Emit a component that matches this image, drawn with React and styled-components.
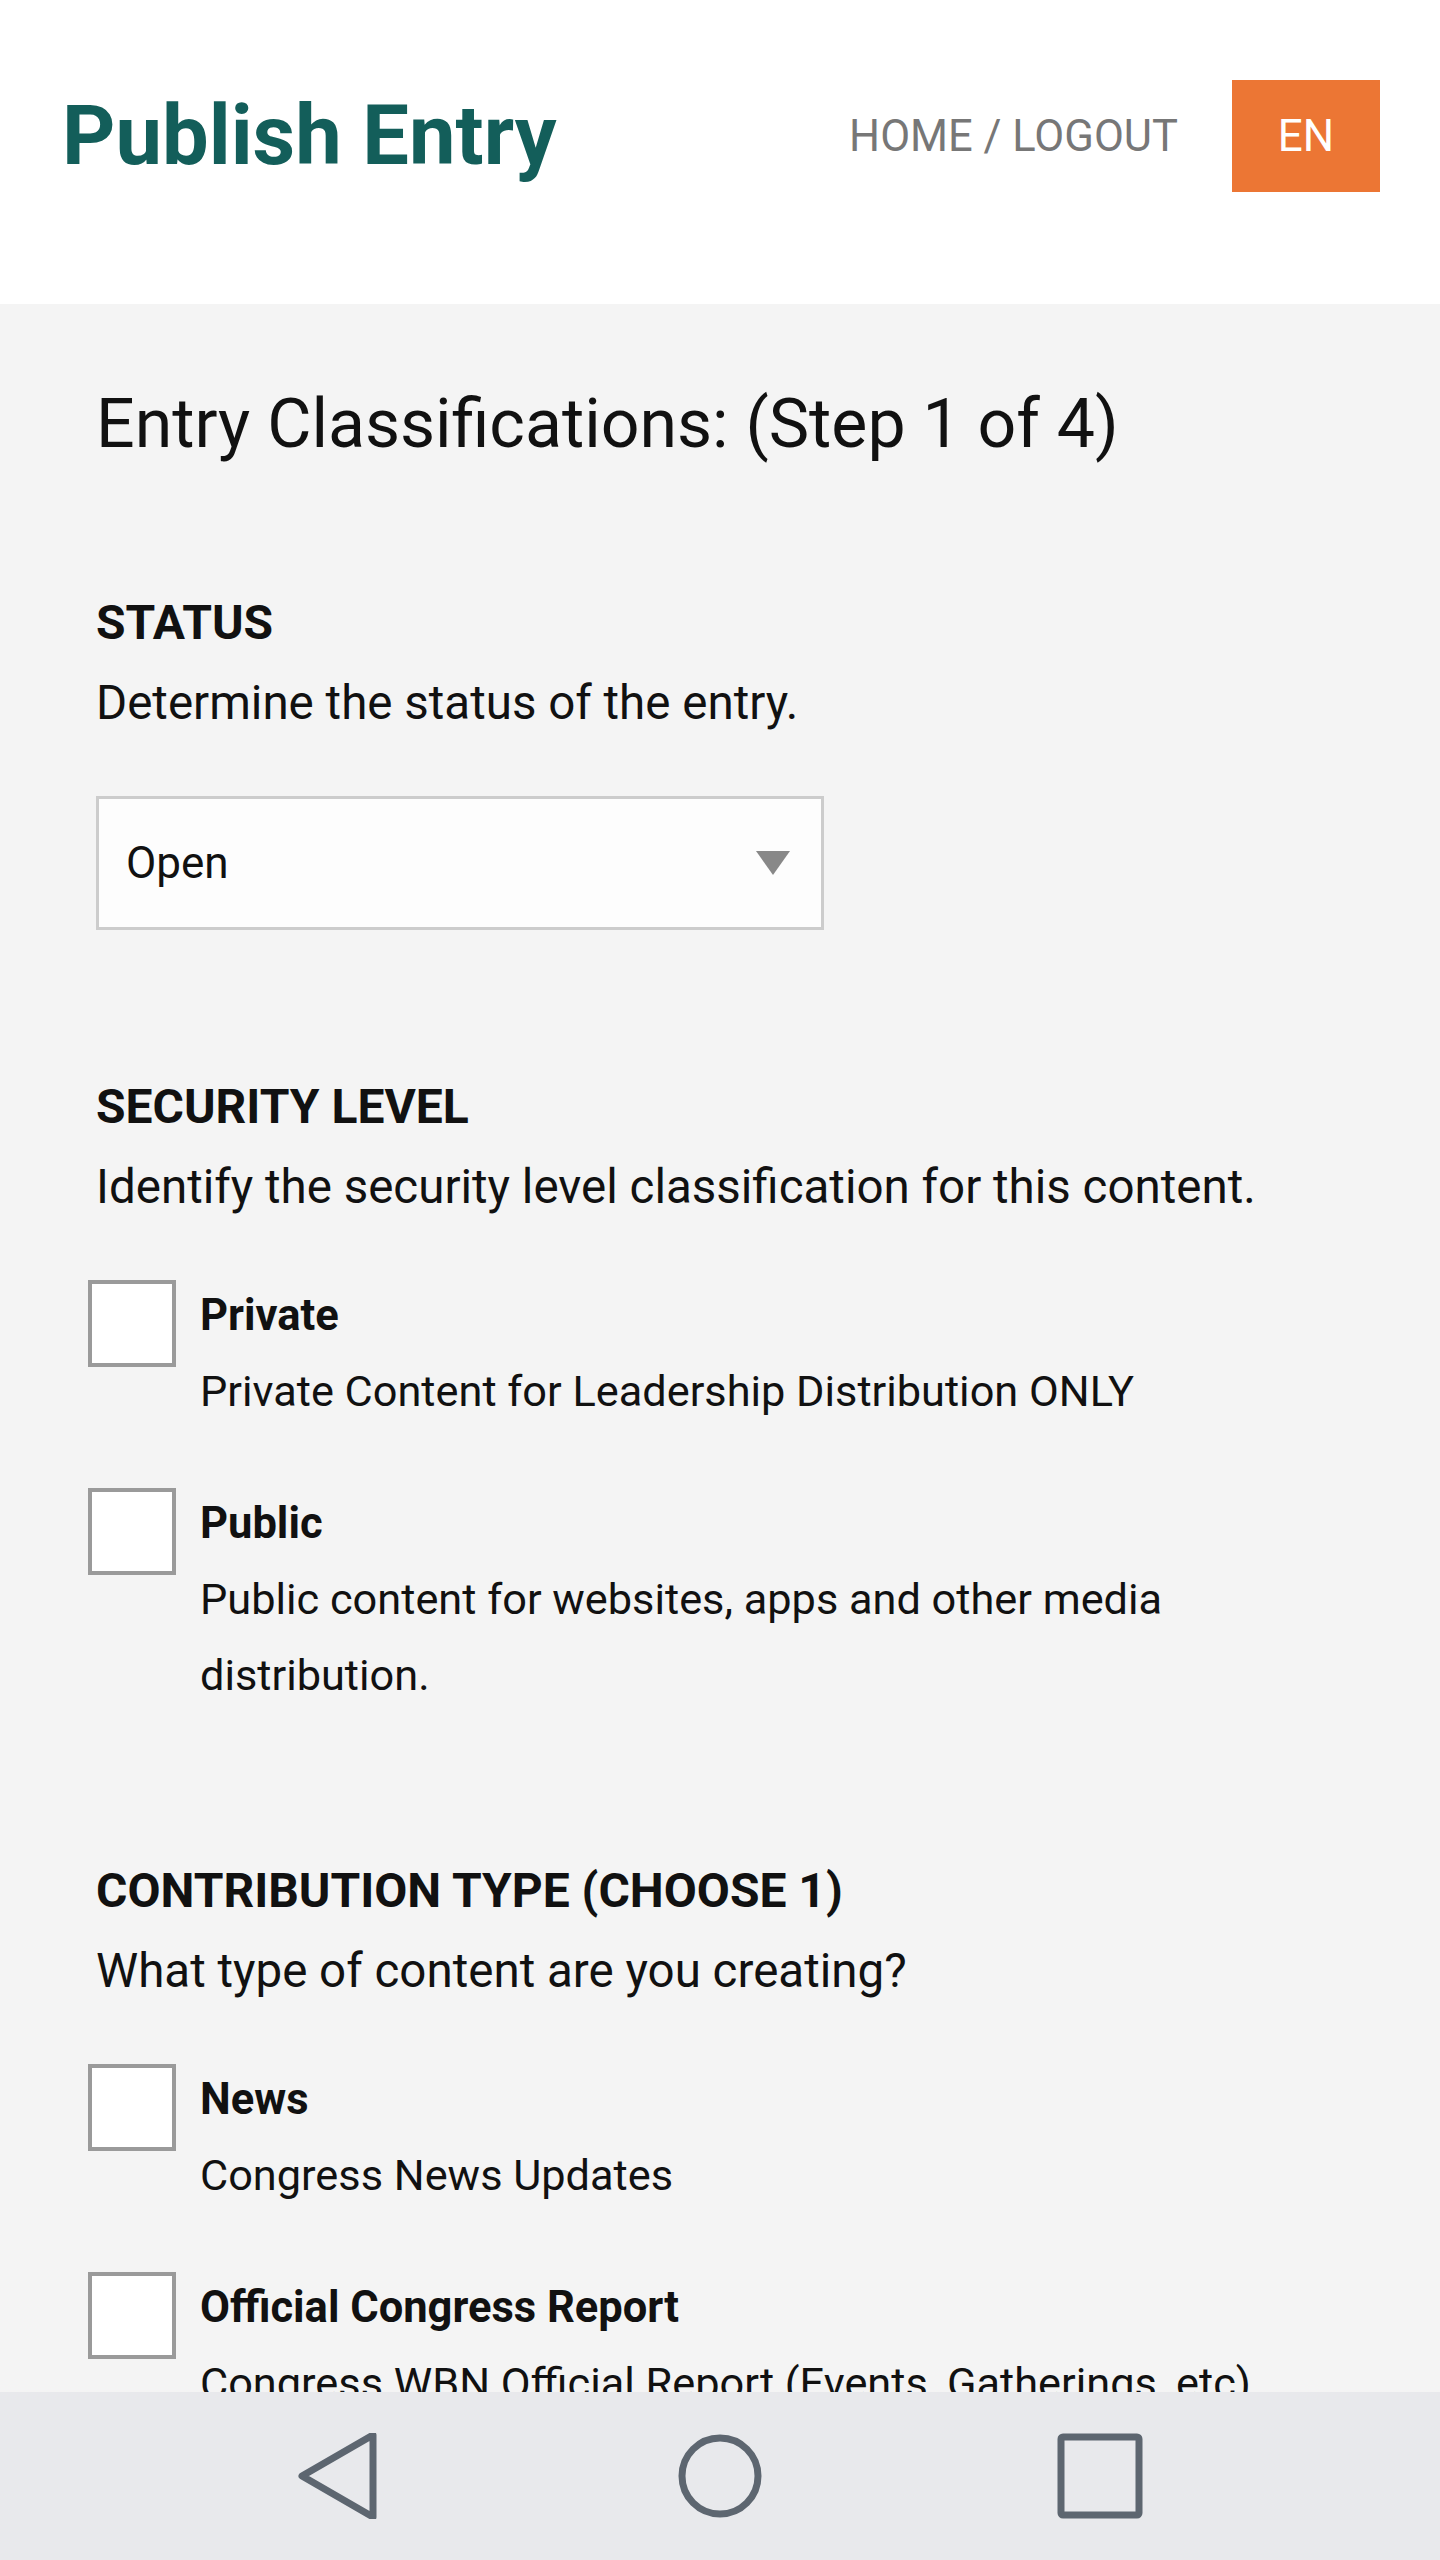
import React from 'react';
import styled, { createGlobalStyle } from 'styled-components';

const COLORS = {
  teal: '#135e5a',
  orange: '#ec7634',
  page: '#f4f4f4',
  text: '#111111',
  gray: '#777777',
  navBar: '#e8e9ec',
  navIcon: '#5d6670',
};

const GlobalStyle = createGlobalStyle`
  * { box-sizing: border-box; }
  body {
    margin: 0;
    background: ${COLORS.page};
    font-family: Roboto, "Liberation Sans", Arial, sans-serif;
    color: ${COLORS.text};
  }
`;

const Header = styled.header`
  height: 304px;
  background: #ffffff;
  padding: 80px 60px 0 62px;
  display: flex;
  justify-content: space-between;
  align-items: flex-start;
`;

const Brand = styled.h1`
  margin: 0;
  font-size: 83px;
  line-height: 112px;
  font-weight: 700;
  color: ${COLORS.teal};
`;

const TopNav = styled.nav`
  display: flex;
  align-items: center;
  height: 112px;
  gap: 54px;
`;

const NavLinks = styled.span`
  font-size: 43.5px;
  color: ${COLORS.gray};
`;

const LangButton = styled.button`
  width: 148px;
  height: 112px;
  border: none;
  background: ${COLORS.orange};
  color: #ffffff;
  font-family: inherit;
  font-size: 44px;
  cursor: pointer;
`;

const Main = styled.main`
  padding: 80px 96px 240px;
`;

const PageTitle = styled.h2`
  margin: 0;
  font-size: 68px;
  line-height: 80px;
  font-weight: 400;
`;

const Section = styled.section`
  margin-top: ${(p) => p.$gap}px;
`;

const SectionTitle = styled.h3`
  margin: 0;
  font-size: 48px;
  line-height: 64px;
  font-weight: 700;
`;

const SectionText = styled.p`
  margin: 16px 0 0;
  font-size: 47.5px;
  line-height: 64px;
`;

const SelectBox = styled.div`
  margin-top: 61px;
  width: 728px;
  height: 134px;
  border: 3px solid #cccccc;
  background: #fdfdfd;
  display: flex;
  align-items: center;
  justify-content: space-between;
  padding: 0 31px 0 27px;
  font-size: 44px;
`;

const Caret = styled.span`
  width: 0;
  height: 0;
  border-left: 17px solid transparent;
  border-right: 17px solid transparent;
  border-top: 24px solid #888888;
`;

const OptionList = styled.div`
  margin-top: 61px;
  display: flex;
  flex-direction: column;
  gap: 58px;
`;

const Option = styled.label`
  display: flex;
  align-items: flex-start;
  gap: 24px;
  margin-left: -8px;
`;

const Box = styled.span`
  flex: none;
  width: 88px;
  height: 87px;
  border: 4px solid #9a9a9a;
  background: #ffffff;
`;

const OptionBody = styled.div`
  display: flex;
  flex-direction: column;
  gap: 2px;
`;

const OptionLabel = styled.span`
  font-size: 43.5px;
  line-height: 72px;
  font-weight: 700;
`;

const OptionText = styled.span`
  font-size: 43.3px;
  line-height: 76px;
  max-width: 1150px;
`;

const SystemBar = styled.div`
  position: fixed;
  left: 0;
  right: 0;
  bottom: 0;
  height: 168px;
  background: ${COLORS.navBar};
  display: flex;
  justify-content: center;
  align-items: center;
  gap: 294px;
`;

const NavIcon = styled.svg`
  width: 86px;
  height: 86px;
  stroke: ${COLORS.navIcon};
  stroke-width: 7;
  fill: none;
  stroke-linejoin: round;
  stroke-linecap: round;
`;

const sections = [
  {
    title: 'SECURITY LEVEL',
    text: 'Identify the security level classification for this content.',
    options: [
      { label: 'Private', text: 'Private Content for Leadership Distribution ONLY' },
      { label: 'Public', text: 'Public content for websites, apps and other media distribution.' },
    ],
  },
  {
    title: 'CONTRIBUTION TYPE (CHOOSE 1)',
    text: 'What type of content are you creating?',
    options: [
      { label: 'News', text: 'Congress News Updates' },
      { label: 'Official Congress Report', text: 'Congress WBN Official Report (Events, Gatherings, etc)' },
    ],
  },
];

export default function App() {
  return (
    <>
      <GlobalStyle />
      <Header>
        <Brand>Publish Entry</Brand>
        <TopNav>
          <NavLinks>HOME / LOGOUT</NavLinks>
          <LangButton>EN</LangButton>
        </TopNav>
      </Header>

      <Main>
        <PageTitle>Entry Classifications: (Step 1 of 4)</PageTitle>

        <Section $gap={127}>
          <SectionTitle>STATUS</SectionTitle>
          <SectionText>Determine the status of the entry.</SectionText>
          <SelectBox>
            <span>Open</span>
            <Caret />
          </SelectBox>
        </Section>

        {sections.map((s) => (
          <Section key={s.title} $gap={145}>
            <SectionTitle>{s.title}</SectionTitle>
            <SectionText>{s.text}</SectionText>
            <OptionList>
              {s.options.map((o) => (
                <Option key={o.label}>
                  <Box />
                  <OptionBody>
                    <OptionLabel>{o.label}</OptionLabel>
                    <OptionText>{o.text}</OptionText>
                  </OptionBody>
                </Option>
              ))}
            </OptionList>
          </Section>
        ))}
      </Main>

      <SystemBar>
        <NavIcon viewBox="0 0 86 86">
          <path d="M5 43 L76 2 L76 84 Z" />
        </NavIcon>
        <NavIcon viewBox="0 0 86 86">
          <circle cx="43" cy="43" r="38" />
        </NavIcon>
        <NavIcon viewBox="0 0 86 86">
          <rect x="4" y="4" width="78" height="78" rx="2" />
        </NavIcon>
      </SystemBar>
    </>
  );
}
